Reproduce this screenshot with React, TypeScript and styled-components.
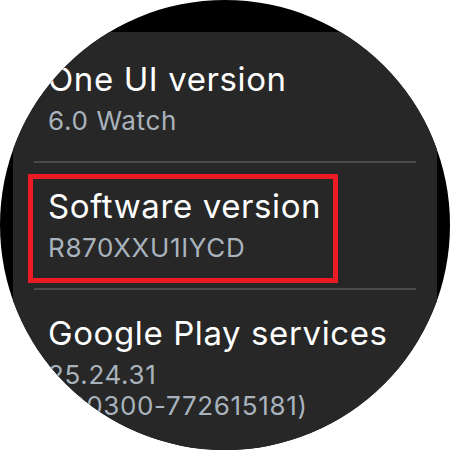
import React from 'react'
import styled, { createGlobalStyle } from 'styled-components'

const GlobalStyle = createGlobalStyle`
  html, body {
    margin: 0;
    padding: 0;
    background: #ffffff;
  }
  body {
    font-family: Inter, Roboto, "Noto Sans", sans-serif;
  }
`

const Page = styled.div`
  width: 450px;
  height: 450px;
  background: #ffffff;
`

const WatchFace = styled.div`
  width: 450px;
  height: 450px;
  border-radius: 50%;
  overflow: hidden;
  background: #000000;
  box-sizing: border-box;
  padding: 32px 13px 0;
  display: flex;
`

const Panel = styled.div`
  flex: 1;
  background: #272727;
  padding-top: 4px;
  display: flex;
  flex-direction: column;
`

const Item = styled.div`
  position: relative;
  padding: 23px 20px 25px 35px;
  display: flex;
  flex-direction: column;
`

const Title = styled.div`
  color: #ffffff;
  font-size: 33px;
  line-height: 40px;
  letter-spacing: 0.6px;
  white-space: nowrap;
`

const Value = styled.div`
  color: #a9b3bd;
  font-size: 26px;
  line-height: 31px;
  letter-spacing: 0.65px;
  margin-top: 6px;
  white-space: nowrap;
`

const Divider = styled.div`
  height: 2px;
  margin: 0 21px;
  background: #4a4a4a;
`

const Highlight = styled.div`
  position: absolute;
  left: 15px;
  top: 11px;
  width: 310px;
  height: 109px;
  box-sizing: border-box;
  border: 5px solid #ed1c24;
  pointer-events: none;
`

type Row = {
  title: string
  lines: string[]
  marked?: boolean
}

const rows: Row[] = [
  { title: 'One UI version', lines: ['6.0 Watch'] },
  { title: 'Software version', lines: ['R870XXU1IYCD'], marked: true },
  { title: 'Google Play services', lines: ['25.24.31', '(190300-772615181)'] },
]

export default function App() {
  return (
    <Page>
      <GlobalStyle />
      <WatchFace>
        <Panel>
          {rows.map((row, i) => (
            <React.Fragment key={row.title}>
              {i > 0 && <Divider />}
              <Item>
                <Title>{row.title}</Title>
                <Value>
                  {row.lines.map((l) => (
                    <div key={l}>{l}</div>
                  ))}
                </Value>
                {row.marked && <Highlight />}
              </Item>
            </React.Fragment>
          ))}
        </Panel>
      </WatchFace>
    </Page>
  )
}
